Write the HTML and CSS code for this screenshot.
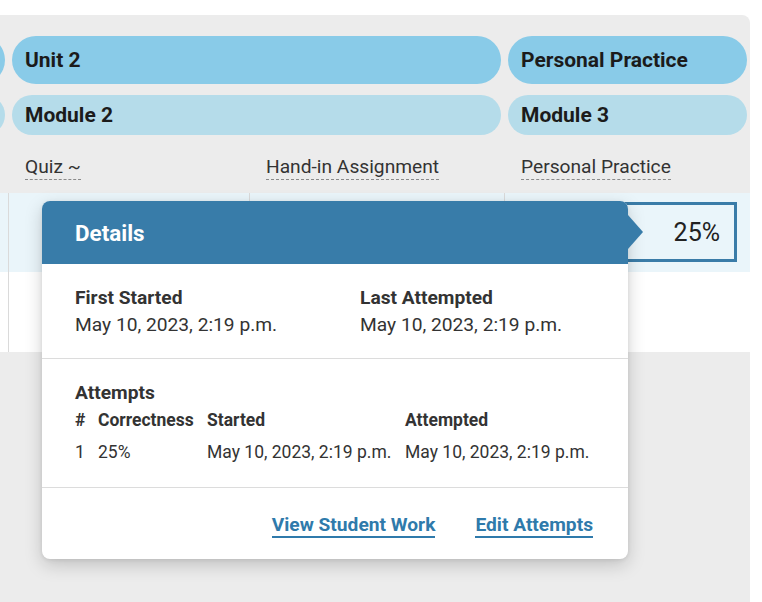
FILE: index.html
```html
<!DOCTYPE html>
<html>
<head>
<meta charset="utf-8">
<link rel="stylesheet" href="styles.css">
</head>
<body>
<div class="page">
  <div class="panel">
    <div class="board">
      <div class="pill unit span1"></div>
      <div class="pill unit span2">Unit 2</div>
      <div class="pill unit span1">Personal Practice</div>

      <div class="pill module span1"></div>
      <div class="pill module span2">Module 2</div>
      <div class="pill module span1">Module 3</div>

      <div class="colhead"></div>
      <div class="colhead"><span class="dash">Quiz ~</span></div>
      <div class="colhead"><span class="dash">Hand-in Assignment</span></div>
      <div class="colhead"><span class="dash">Personal Practice</span></div>

      <div class="cell hl first"></div>
      <div class="cell hl"></div>
      <div class="cell hl"></div>
      <div class="cell hl"><div class="score">25%</div></div>

      <div class="cell first"></div>
      <div class="cell"></div>
      <div class="cell"></div>
      <div class="cell"></div>
    </div>

    <div class="popover">
      <div class="pop-head">Details</div>
      <div class="pop-section times">
        <div>
          <div class="label">First Started</div>
          <div class="value">May 10, 2023, 2:19 p.m.</div>
        </div>
        <div>
          <div class="label">Last Attempted</div>
          <div class="value">May 10, 2023, 2:19 p.m.</div>
        </div>
      </div>
      <div class="pop-section attempts">
        <div class="label">Attempts</div>
        <div class="att-table">
          <div class="th">#</div>
          <div class="th">Correctness</div>
          <div class="th">Started</div>
          <div class="th">Attempted</div>
          <div class="td">1</div>
          <div class="td">25%</div>
          <div class="td">May 10, 2023, 2:19 p.m.</div>
          <div class="td">May 10, 2023, 2:19 p.m.</div>
        </div>
      </div>
      <div class="pop-foot">
        <a class="link">View Student Work</a>
        <a class="link">Edit Attempts</a>
      </div>
    </div>
  </div>
</div>
</body>
</html>
```

FILE: styles.css
```css
html, body {
  margin: 0;
  padding: 0;
  background: #ffffff;
}

body {
  font-family: Roboto, "Liberation Sans", sans-serif;
  color: #333333;
}

.page {
  padding-top: 15px;
  width: 762px;
  height: 587px;
}

.panel {
  position: relative;
  width: 750px;
  height: 587px;
  background: #ececec;
  border-top-right-radius: 8px;
  overflow: hidden;
}

.board {
  margin-left: -232px;
  display: grid;
  grid-template-columns: 240px 241px 255px 246px;
  grid-template-rows: 48px 51px 58px 79px 80px;
  padding-top: 21px;
}

.pill {
  display: flex;
  align-items: center;
  padding: 0 13px;
  margin: 0 3px 0 4px;
  font-size: 21px;
  font-weight: 700;
  color: #1b1b1b;
}

.pill.span2 {
  grid-column: span 2;
}

.pill.unit {
  background: #89cbe8;
  border-radius: 24px;
}

.pill.module {
  background: #b5dcea;
  border-radius: 20px;
  margin-top: 11px;
  height: 40px;
}

.colhead {
  padding: 20px 0 0 17px;
  font-size: 19.2px;
  line-height: 24px;
  color: #333333;
}

.dash {
  display: inline-block;
  border-bottom: 1px dashed #8a8a8a;
}

.cell {
  background: #ffffff;
  border-left: 1px solid #dadada;
}

.cell.hl {
  background: #eaf5fa;
}

.score {
  margin: 9px 13px 9px 8px;
  height: 54px;
  border: 3px solid #3a7ca8;
  background: #eaf5fa;
  display: flex;
  align-items: center;
  justify-content: flex-end;
  padding-right: 14px;
  font-size: 25px;
  color: #222222;
}

/* popover */
.popover {
  position: absolute;
  left: 42px;
  top: 186px;
  width: 586px;
  background: #ffffff;
  border-radius: 8px;
  box-shadow: 0 6px 18px rgba(0, 0, 0, 0.18), 0 1px 4px rgba(0, 0, 0, 0.08);
}

.pop-head {
  position: relative;
  height: 63px;
  background: #387ca9;
  border-radius: 8px 8px 0 0;
  display: flex;
  align-items: center;
  padding-left: 33px;
  color: #ffffff;
  font-size: 22.4px;
  font-weight: 700;
}

.pop-head::after {
  content: "";
  position: absolute;
  right: -15px;
  top: 14px;
  width: 0;
  height: 0;
  border-top: 17.5px solid transparent;
  border-bottom: 17.5px solid transparent;
  border-left: 15px solid #387ca9;
}

.pop-section {
  padding: 20px 33px 20px 33px;
  border-bottom: 1px solid #dcdcdc;
}

.times {
  display: grid;
  grid-template-columns: 285px 1fr;
}

.label {
  font-size: 19.2px;
  line-height: 27px;
  font-weight: 700;
  color: #333333;
}

.value {
  font-size: 19.2px;
  line-height: 27px;
  color: #333333;
}

.attempts {
  padding-top: 20px;
  padding-bottom: 21px;
}

.att-table {
  display: grid;
  grid-template-columns: 23px 109px 198px 1fr;
  row-gap: 5px;
  padding-top: 1px;
  font-size: 17.5px;
  line-height: 27px;
  color: #333333;
}

.th {
  font-weight: 700;
}

.pop-foot {
  height: 71px;
  box-sizing: border-box;
  display: flex;
  justify-content: flex-end;
  align-items: flex-start;
  gap: 40px;
  padding: 25px 35px 0 0;
}

.link {
  font-size: 19.2px;
  line-height: 23px;
  font-weight: 700;
  color: #2f7aab;
  border-bottom: 2px solid #2f7aab;
  cursor: pointer;
}
```
